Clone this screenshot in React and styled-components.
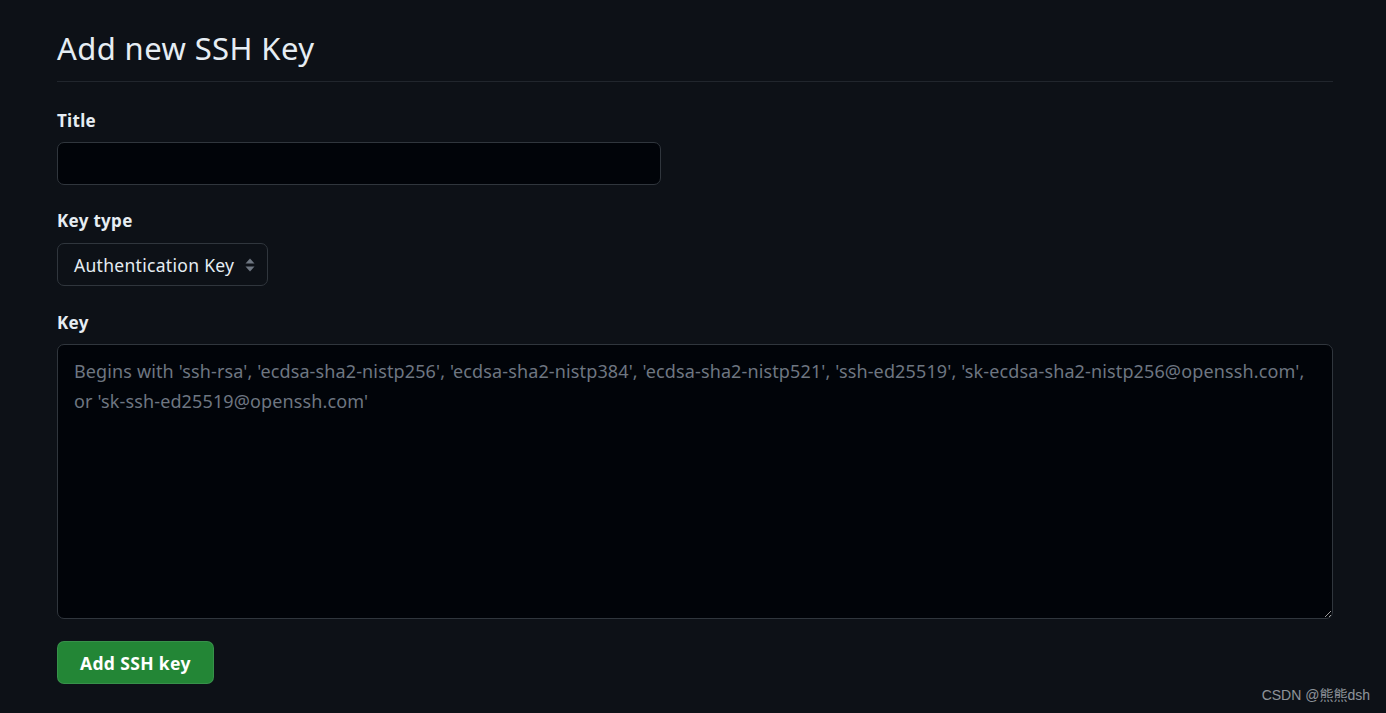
import React from "react";
import styled, { createGlobalStyle } from "styled-components";

const GlobalStyle = createGlobalStyle`
  html, body {
    margin: 0;
    padding: 0;
    background: #0d1117;
    color-scheme: dark;
  }
  body {
    font-family: "Noto Sans", "Open Sans", "Liberation Sans", sans-serif;
    color: #e6edf3;
  }
`;

const Page = styled.div`
  position: relative;
  min-height: 713px;
  box-sizing: border-box;
  padding: 26px 53px 0 57px;
`;

const Subhead = styled.div`
  border-bottom: 1px solid #21262d;
  padding-bottom: 10px;
`;

const Heading = styled.h2`
  margin: 0;
  font-size: 31px;
  font-weight: 400;
  line-height: 45px;
  letter-spacing: 0.4px;
  color: #e6edf3;
`;

const Form = styled.form`
  display: flex;
  flex-direction: column;
  align-items: flex-start;
  padding-top: 26px;
`;

const Group = styled.div`
  display: flex;
  flex-direction: column;
  align-items: stretch;
  width: ${(p) => p.$width || "auto"};
  margin-bottom: ${(p) => p.$gap || "24px"};
`;

const Label = styled.label`
  font-size: 17px;
  font-weight: 700;
  line-height: 26px;
  letter-spacing: 0.3px;
  margin-bottom: ${(p) => p.$gap || "9px"};
  color: #e6edf3;
`;

const TextInput = styled.input`
  box-sizing: border-box;
  height: 43px;
  padding: 0 15px;
  background: #010409;
  border: 1px solid #30363d;
  border-radius: 7px;
  color: #e6edf3;
  font: inherit;
  font-size: 17px;
  outline: none;
`;

const SelectBox = styled.div`
  box-sizing: border-box;
  display: flex;
  align-items: center;
  gap: 10px;
  height: 43px;
  padding: 0 11px 0 16px;
  background: #0d1117;
  border: 1px solid #30363d;
  border-radius: 7px;
  font-size: 17.5px;
  letter-spacing: 0.3px;
  color: #e6edf3;
  align-self: flex-start;
`;

const KeyArea = styled.textarea`
  box-sizing: border-box;
  width: 100%;
  height: 275px;
  padding: 11px 6px 11px 16px;
  background: #010409;
  border: 1px solid #30363d;
  border-radius: 7px;
  color: #e6edf3;
  font: inherit;
  font-size: 18px;
  line-height: 30px;
  letter-spacing: 0.13px;
  outline: none;
  resize: vertical;
  &::placeholder {
    color: #6e7681;
  }
`;

const SubmitButton = styled.button`
  box-sizing: border-box;
  height: 43px;
  padding: 0 22px;
  background: #238636;
  border: 1px solid rgba(240, 246, 252, 0.1);
  border-radius: 7px;
  color: #ffffff;
  font: inherit;
  font-size: 17.5px;
  font-weight: 700;
  letter-spacing: 0.35px;
  cursor: pointer;
`;

const Watermark = styled.div`
  position: absolute;
  right: 16px;
  bottom: 9px;
  font-family: "Liberation Sans", "Noto Sans CJK SC", sans-serif;
  font-size: 14px;
  color: rgba(230, 237, 243, 0.6);
`;

function Arrows() {
  return (
    <svg width="12" height="16" viewBox="0 0 12 16" fill="#6e7681">
      <path d="M6 1.5 L10.5 6.5 H1.5 Z" />
      <path d="M6 14.5 L10.5 9.5 H1.5 Z" />
    </svg>
  );
}

const placeholder =
  "Begins with 'ssh-rsa', 'ecdsa-sha2-nistp256', 'ecdsa-sha2-nistp384', 'ecdsa-sha2-nistp521', 'ssh-ed25519', 'sk-ecdsa-sha2-nistp256@openssh.com',\nor 'sk-ssh-ed25519@openssh.com'";

export default function App() {
  return (
    <>
      <GlobalStyle />
      <Page>
        <Subhead>
          <Heading>Add new SSH Key</Heading>
        </Subhead>
        <Form onSubmit={(e) => e.preventDefault()}>
          <Group $width="604px" $gap="23px">
            <Label $gap="8px">Title</Label>
            <TextInput type="text" />
          </Group>
          <Group>
            <Label>Key type</Label>
            <SelectBox>
              <span>Authentication Key</span>
              <Arrows />
            </SelectBox>
          </Group>
          <Group $width="100%" $gap="22px">
            <Label $gap="8px">Key</Label>
            <KeyArea placeholder={placeholder} />
          </Group>
          <SubmitButton type="submit">Add SSH key</SubmitButton>
        </Form>
        <Watermark>CSDN @熊熊dsh</Watermark>
      </Page>
    </>
  );
}
